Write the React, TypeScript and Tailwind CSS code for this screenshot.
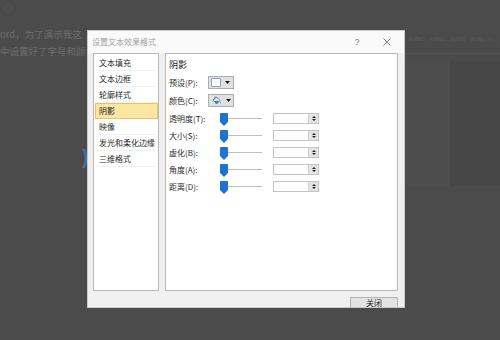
import React from "react";

const CJK = "font-['Noto_Sans_CJK_SC','Noto_Sans',sans-serif]";

const LIST_ITEMS = ["文本填充", "文本边框", "轮廓样式", "阴影", "映像", "发光和柔化边缘", "三维格式"];
const SLIDERS = ["透明度(T):", "大小(S):", "虚化(B):", "角度(A):", "距离(D):"];

function Caret() {
  return (
    <svg width="5" height="3" viewBox="0 0 5 3">
      <path d="M0 0 H5 L2.5 3 Z" fill="#1a1a1a" />
    </svg>
  );
}

function Thumb() {
  return (
    <svg width="8" height="13" viewBox="0 0 8 13" className="shrink-0 self-start mt-[3px]">
      <path d="M1 0 H7 Q8 0 8 1 V9 L4 13 L0 9 V1 Q0 0 1 0 Z" fill="#1f72d2" />
    </svg>
  );
}

function SpinBox() {
  return (
    <div className="w-[46px] h-[11px] border border-[#c4c4c4] bg-white flex justify-end">
      <div className="w-[10px] h-full bg-[#e4e4e4] border-l border-[#d2d2d2] flex flex-col items-center justify-center gap-[1px]">
        <svg width="4" height="2" viewBox="0 0 4 2">
          <path d="M0 2 L2 0 L4 2 Z" fill="#222" />
        </svg>
        <svg width="4" height="2" viewBox="0 0 4 2">
          <path d="M0 0 H4 L2 2 Z" fill="#222" />
        </svg>
      </div>
    </div>
  );
}

function DropButton({ children }: { children: React.ReactNode }) {
  return (
    <div className="w-[26px] h-[13px] border border-[#adadad] bg-[#e1e1e1] flex items-center pl-[2px] gap-[4px]">
      {children}
      <Caret />
    </div>
  );
}

function Bucket() {
  return (
    <svg width="11" height="10" viewBox="0 0 11 10">
      <path d="M2 4 L5.5 1 L9 4.5 L5.5 8 Z" fill="#ffffff" stroke="#4a6b8c" strokeWidth="0.9" />
      <path d="M3 5 L6.5 4.6 L8.2 5.3 L5.5 8 Z" fill="#3c7fd0" />
      <path d="M9.3 5.2 Q10.4 7 9.6 7.8 Q8.8 7.6 9.3 5.2 Z" fill="#3c7fd0" />
      <path d="M4.3 0.5 L3.6 3.6" stroke="#4a6b8c" strokeWidth="0.8" />
    </svg>
  );
}

function Dialog() {
  return (
    <div className={`absolute left-[87px] top-[30px] w-[318px] h-[278px] border border-[#c9c9c9] bg-[#f0f0f0] flex flex-col overflow-hidden ${CJK}`}>
      <div className="h-[22px] bg-[#fafafa] flex items-center pl-[4px] pr-[13px]">
        <span className="text-[8px] leading-[10px] text-[#a3a3a3]">设置文本效果格式</span>
        <span className="ml-auto w-[10px] text-center text-[9px] leading-[10px] text-[#7a7a7a] font-['Liberation_Sans',sans-serif]">?</span>
        <svg width="8" height="8" viewBox="0 0 8 8" className="ml-[21px]">
          <path d="M0.5 0.5 L7.5 7.5 M7.5 0.5 L0.5 7.5" stroke="#6f6f6f" strokeWidth="0.9" />
        </svg>
      </div>

      <div className="h-[238px] flex gap-[6px] px-[5px] pr-[6px]">
        <div className="w-[66px] h-full border border-[#b8b8b8] bg-white pt-[1px] flex flex-col">
          {LIST_ITEMS.map((item) =>
            item === "阴影" ? (
              <div
                key={item}
                className="h-[16px] ml-[1px] border border-[#e6c463] bg-[#fce7a2] flex items-center pl-[3px] text-[8px] leading-[10px] text-[#222]"
              >
                {item}
              </div>
            ) : (
              <div
                key={item}
                className="h-[16px] ml-[2px] mr-[1px] border-b border-[#f0f0f0] flex items-center pl-[3px] text-[8px] leading-[10px] text-[#2a2a2a] whitespace-nowrap"
              >
                {item}
              </div>
            )
          )}
        </div>

        <div className="flex-1 h-full border border-[#b8b8b8] bg-white pl-[3px] pt-[3px] flex flex-col">
          <div className="h-[14px] flex items-center text-[9px] leading-[11px] text-[#1a1a1a]">阴影</div>
          <div className="mt-[5px] h-[13px] flex items-center">
            <span className="w-[39px] text-[8px] leading-[10px] text-[#2a2a2a]">预设(P):</span>
            <DropButton>
              <div className="w-[10px] h-[9px] bg-white border border-[#8aa2bc] rounded-[1px]" />
            </DropButton>
          </div>
          <div className="mt-[5px] h-[13px] flex items-center">
            <span className="w-[39px] text-[8px] leading-[10px] text-[#2a2a2a]">颜色(C):</span>
            <DropButton>
              <Bucket />
            </DropButton>
          </div>
          <div className="mt-[3px] flex flex-col">
            {SLIDERS.map((label) => (
              <div key={label} className="h-[17px] flex items-center">
                <span className="w-[51px] text-[8px] leading-[10px] text-[#2a2a2a] whitespace-nowrap">{label}</span>
                <Thumb />
                <div className="w-[34px] h-px bg-[#bdbdbd]" />
                <div className="ml-[11px]">
                  <SpinBox />
                </div>
              </div>
            ))}
          </div>
        </div>
      </div>

      <div className="h-[16px] flex justify-end pr-[6px] pt-[6px]">
        <div className="w-[48px] h-[14px] border border-[#b3b3b3] bg-[#e3e3e3] flex justify-center text-[8px] leading-[10px] text-[#222]">
          关闭
        </div>
      </div>
    </div>
  );
}

export default function App() {
  return (
    <div className={`relative w-[500px] h-[340px] bg-[#4b4b4b] overflow-hidden flex ${CJK}`}>
      {/* document text left of the dialog */}
      <div className="w-[87px] shrink-0 flex flex-col">
        <div className="ml-[4px] mt-[4px] w-[8px] h-[8px] rounded-full border border-[#575757]" />
        <div className="mt-[14px] text-[9.5px] leading-[17px] text-[#6e6e6e] whitespace-nowrap">ord，为了演示我这</div>
        <div className="text-[9.5px] leading-[17px] text-[#6e6e6e] whitespace-nowrap">中设置好了字号和颜</div>
        <div className="mt-[86px] ml-[82px] text-[20px] leading-[22px] font-bold text-[#3d74a6] font-['Liberation_Sans',sans-serif]">)</div>
      </div>

      <div className="w-[318px] shrink-0" />

      <div className="flex-1 flex flex-col">
        <div className="mt-[33px] h-[12px] flex items-center gap-[5px] pl-[4px] text-[5px] leading-[6px] text-[#5e5e5e] whitespace-nowrap overflow-hidden">
          <span>AaBbC</span>
          <span>AaBbC</span>
          <span>AaBbC</span>
          <span>AaBb</span>
          <span>Aa</span>
        </div>
        <div className="mt-[8px] h-px bg-[#525252]" />
        <div className="mt-[7px] h-[125px] flex">
          <div className="w-[45px] bg-[#4d4d4d] border-r border-[#505050]" />
          <div className="flex-1 bg-[#474747]" />
        </div>
      </div>

      <Dialog />
    </div>
  );
}
